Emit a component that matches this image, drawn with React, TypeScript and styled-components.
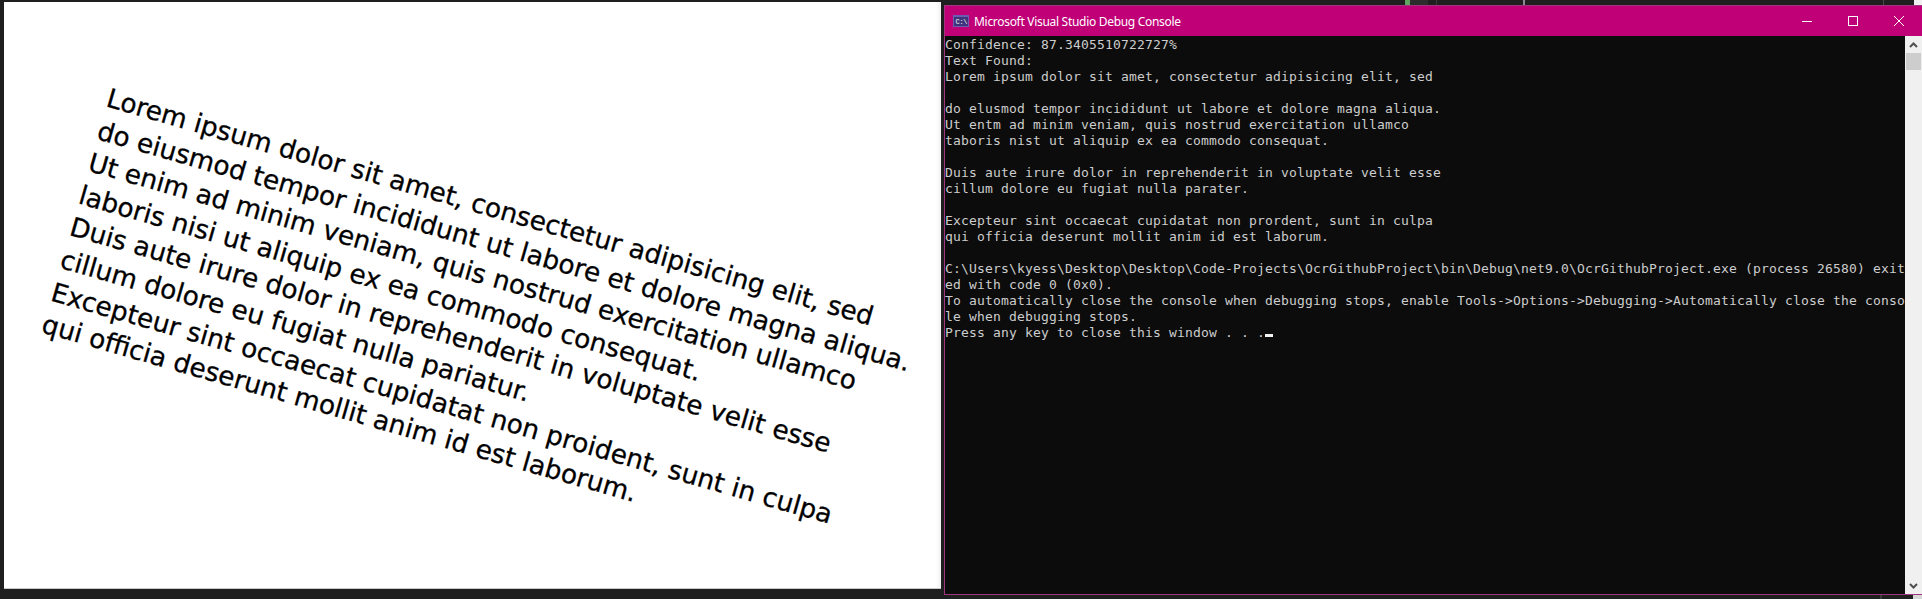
import styled, { createGlobalStyle } from "styled-components";

const GlobalStyle = createGlobalStyle`
  html, body {
    margin: 0;
    padding: 0;
    background: #1f1f1f;
  }
`;

const Page = styled.div`
  display: flex;
  width: 1922px;
  height: 599px;
  overflow: hidden;
  background: #1f1f1f;
`;

const ImagePanel = styled.div`
  width: 937px;
  height: 587px;
  margin: 2px 3px 0 4px;
  padding: 80px 0 0 108px;
  box-sizing: border-box;
  background: #fff;
  border-bottom: 1px solid #c8c8c8;
  box-shadow: inset -6px 0 6px -6px rgba(0, 0, 0, 0.12);
  overflow: hidden;
  flex: none;
`;

const SkewedText = styled.div`
  font-family: "DejaVu Sans", sans-serif;
  font-size: 26.3px;
  line-height: 33.6px;
  color: #000;
  white-space: pre;
  -webkit-text-stroke: 0.3px #000;
  transform: rotate(16deg);
  transform-origin: 0 0;
`;

const RightColumn = styled.div`
  flex: 1;
  display: flex;
  flex-direction: column;
  min-width: 0;
`;

const Strip = styled.div`
  height: ${(p) => p.$height}px;
  flex: none;
  display: flex;
  background: #1f1f1f;
`;

const StripMark = styled.div`
  width: ${(p) => p.$width}px;
  margin-left: ${(p) => p.$left}px;
  background: ${(p) => p.$color};
  flex: none;
`;

const ConsoleWindow = styled.div`
  width: 978px;
  height: 590px;
  flex: none;
  box-sizing: border-box;
  border: 1px solid #a3357f;
  border-right: 0;
  display: flex;
  flex-direction: column;
  background: #0c0c0c;
`;

const TitleBar = styled.div`
  height: 30px;
  flex: none;
  background: #c00077;
  display: flex;
  align-items: center;
  padding-left: 8px;
  color: #fff;
  font-family: "Noto Sans", "Liberation Sans", sans-serif;
  font-size: 12px;
  letter-spacing: -0.3px;
`;

const TitleText = styled.span`
  margin-left: 5px;
  flex: 1;
`;

const WindowButton = styled.div`
  width: 46px;
  height: 30px;
  display: flex;
  align-items: center;
  justify-content: center;
`;

const ConsoleBody = styled.div`
  flex: 1;
  display: flex;
  min-height: 0;
`;

const ConsoleText = styled.pre`
  flex: 1;
  margin: 0;
  padding: 1px 0 0 0;
  font-family: "DejaVu Sans Mono", monospace;
  font-size: 13px;
  letter-spacing: 0.174px;
  line-height: 16px;
  color: #cccccc;
`;

const Cursor = styled.span`
  display: inline-block;
  width: 8px;
  height: 3px;
  background: #f2f2f2;
`;

const ScrollBar = styled.div`
  width: 17px;
  flex: none;
  background: #f0f0f0;
  display: flex;
  flex-direction: column;
  align-items: center;
`;

const ScrollButton = styled.div`
  height: 17px;
  flex: none;
  display: flex;
  align-items: center;
  justify-content: center;
`;

const ScrollThumb = styled.div`
  width: 15px;
  height: 17px;
  background: #cdcdcd;
`;

const ScrollTrack = styled.div`
  flex: 1;
`;

const imageLines = [
  "Lorem ipsum dolor sit amet, consectetur adipisicing elit, sed",
  "do eiusmod tempor incididunt ut labore et dolore magna aliqua.",
  "Ut enim ad minim veniam, quis nostrud exercitation ullamco",
  "laboris nisi ut aliquip ex ea commodo consequat.",
  "Duis aute irure dolor in reprehenderit in voluptate velit esse",
  "cillum dolore eu fugiat nulla pariatur.",
  "Excepteur sint occaecat cupidatat non proident, sunt in culpa",
  "qui officia deserunt mollit anim id est laborum.",
];

const consoleLines = `Confidence: 87.3405510722727%
Text Found:
Lorem ipsum dolor sit amet, consectetur adipisicing elit, sed

do elusmod tempor incididunt ut labore et dolore magna aliqua.
Ut entm ad minim veniam, quis nostrud exercitation ullamco
taboris nist ut aliquip ex ea commodo consequat.

Duis aute irure dolor in reprehenderit in voluptate velit esse
cillum dolore eu fugiat nulla parater.

Excepteur sint occaecat cupidatat non prordent, sunt in culpa
qui officia deserunt mollit anim id est laborum.

C:\\Users\\kyess\\Desktop\\Desktop\\Code-Projects\\OcrGithubProject\\bin\\Debug\\net9.0\\OcrGithubProject.exe (process 26580) exit
ed with code 0 (0x0).
To automatically close the console when debugging stops, enable Tools->Options->Debugging->Automatically close the conso
le when debugging stops.
Press any key to close this window . . .`;

export default function App() {
  return (
    <Page>
      <GlobalStyle />
      <ImagePanel>
        <SkewedText>{imageLines.join("\n")}</SkewedText>
      </ImagePanel>
      <RightColumn>
        <Strip $height={5}>
          <StripMark $left={461} $width={5} $color="#5fa65f" />
          <StripMark $left={0} $width={18} $color="#2d2d2d" />
          <StripMark $left={8} $width={1} $color="#3a3a3a" />
          <StripMark $left={86} $width={2} $color="#8a8a96" />
          <StripMark $left={358} $width={1} $color="#4a4a4a" />
          <StripMark $left={30} $width={9} $color="#f0f0f0" />
        </Strip>
        <ConsoleWindow>
          <TitleBar>
            <svg width="16" height="12" viewBox="0 0 16 12">
              <rect width="16" height="12" fill="#6a5cb0" />
              <rect x="1" y="2" width="14" height="9" fill="#40347c" />
              <text x="2.5" y="9" fontSize="7" fill="#fff" fontFamily="Liberation Mono">C:\</text>
            </svg>
            <TitleText>Microsoft Visual Studio Debug Console</TitleText>
            <WindowButton>
              <svg width="10" height="10" viewBox="0 0 10 10"><path d="M0 5.5H10" stroke="#fff" /></svg>
            </WindowButton>
            <WindowButton>
              <svg width="10" height="10" viewBox="0 0 10 10"><rect x=".5" y=".5" width="9" height="9" fill="none" stroke="#fff" /></svg>
            </WindowButton>
            <WindowButton>
              <svg width="10" height="10" viewBox="0 0 10 10"><path d="M0 0L10 10M10 0L0 10" stroke="#fff" /></svg>
            </WindowButton>
          </TitleBar>
          <ConsoleBody>
            <ConsoleText>
              {consoleLines}
              <Cursor />
            </ConsoleText>
            <ScrollBar>
              <ScrollButton>
                <svg width="9" height="6" viewBox="0 0 9 6"><path d="M1 5L4.5 1.5L8 5" fill="none" stroke="#505050" strokeWidth="2" /></svg>
              </ScrollButton>
              <ScrollThumb />
              <ScrollTrack />
              <ScrollButton>
                <svg width="9" height="6" viewBox="0 0 9 6"><path d="M1 1L4.5 4.5L8 1" fill="none" stroke="#505050" strokeWidth="2" /></svg>
              </ScrollButton>
            </ScrollBar>
          </ConsoleBody>
        </ConsoleWindow>
        <Strip $height={4}>
          <StripMark $left={936} $width={2} $color="#3a3a3a" />
          <StripMark $left={31} $width={9} $color="#d8d8d8" />
        </Strip>
      </RightColumn>
    </Page>
  );
}
